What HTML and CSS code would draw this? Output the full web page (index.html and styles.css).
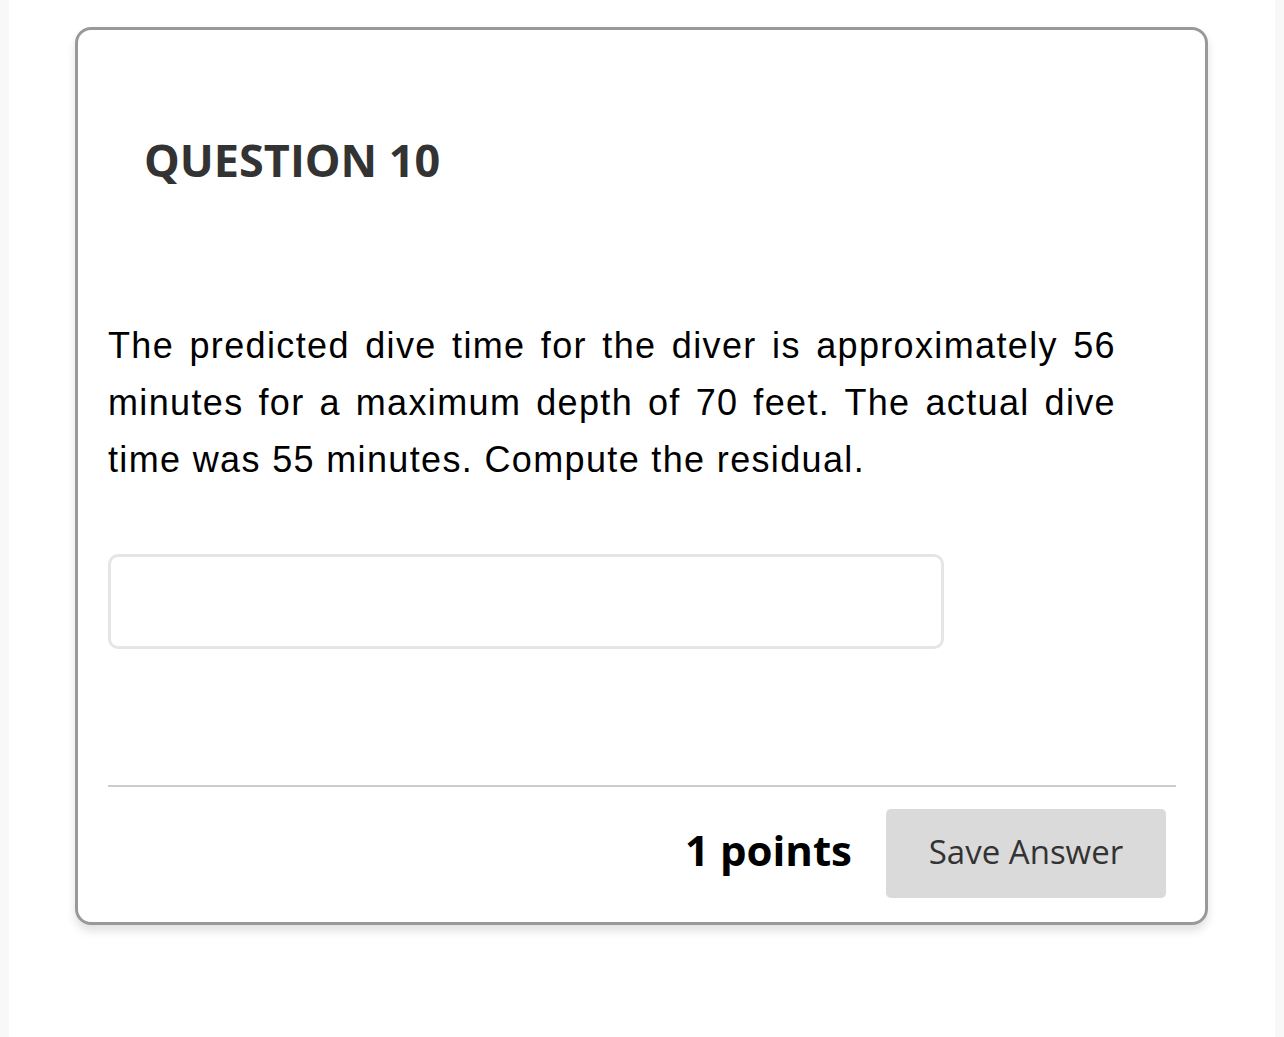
FILE: index.html
```html
<!DOCTYPE html>
<html lang="en">
<head>
<meta charset="utf-8">
<title>Question 10</title>
<link rel="stylesheet" href="styles.css">
</head>
<body>
<div class="page">
  <div class="card">
    <h2 class="q-title">QUESTION 10</h2>
    <p class="q-text">The predicted dive time for the diver is approximately 56 minutes for a maximum depth of 70 feet. The actual dive time was 55 minutes. Compute the residual.</p>
    <div class="answer"></div>
    <div class="divider"></div>
    <div class="footer">
      <span class="points">1 points</span>
      <button class="save">Save Answer</button>
    </div>
  </div>
</div>
</body>
</html>
```
FILE: styles.css
```css
html, body {
  margin: 0;
  padding: 0;
  background: #f8f8f8;
}
.page {
  margin: 0 9px;
  background: #ffffff;
  min-height: 1037px;
  padding: 27px 0 0 66px;
  box-sizing: border-box;
}
.card {
  width: 1133px;
  height: 898px;
  box-sizing: border-box;
  border: 3px solid #999999;
  border-radius: 16px;
  background: #fff;
  box-shadow: 0 6px 10px rgba(0,0,0,0.12);
  padding: 0 29px 0 30px;
  display: flex;
  flex-direction: column;
}
.q-title {
  font-family: "Open Sans", sans-serif;
  font-weight: 700;
  font-size: 45px;
  line-height: 60px;
  color: #333333;
  margin: 100px 0 0 36px;
}
.q-text {
  font-family: "Liberation Sans", Arial, sans-serif;
  font-size: 36px;
  letter-spacing: 1.35px;
  line-height: 57px;
  color: #000;
  text-align: justify;
  width: 1008px;
  margin: 127px 0 0 0;
}
.answer {
  width: 836px;
  height: 95px;
  box-sizing: border-box;
  border: 3px solid #e5e5e5;
  border-radius: 10px;
  margin-top: 66px;
}
.divider {
  height: 2px;
  background: #cccccc;
  margin-top: 136px;
  width: 1068px;
}
.footer {
  display: flex;
  justify-content: flex-end;
  align-items: center;
  gap: 34px;
  margin-top: 22px;
  padding-right: 10px;
  width: 1068px;
  box-sizing: border-box;
}
.points {
  font-family: "Open Sans", sans-serif;
  font-weight: 700;
  font-size: 42px;
  line-height: 50px;
  color: #000;
  position: relative;
  top: -4px;
}
.save {
  width: 280px;
  height: 89px;
  border: none;
  border-radius: 5px;
  background: #dadada;
  font-family: "Open Sans", sans-serif;
  font-size: 33px;
  color: #333333;
  padding: 0 0 4px 0;
}
```
